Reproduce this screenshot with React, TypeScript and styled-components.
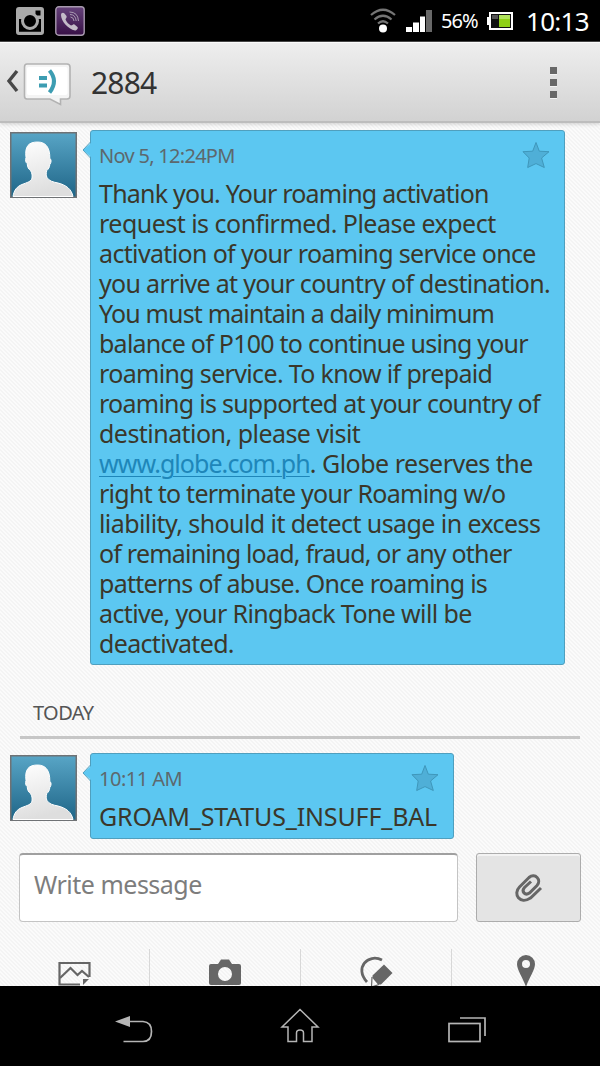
import React from "react";
import styled, { createGlobalStyle } from "styled-components";

const Global = createGlobalStyle`
  * { box-sizing: border-box; }
  body { margin: 0; font-family: "Noto Sans", "Open Sans", sans-serif; background: #000; }
`;

const Screen = styled.div`
  width: 600px;
  height: 1066px;
  display: flex;
  flex-direction: column;
  overflow: hidden;
`;

const StatusBar = styled.div`
  height: 42px;
  flex: none;
  display: flex;
  align-items: center;
  background: #000;
  border-bottom: 1px solid #4a4a4a;
  color: #fff;
  padding: 0 10px 0 16px;
`;

const StatusIcons = styled.div`
  display: flex;
  align-items: center;
  gap: 11px;
  flex: 1;
`;

const Battery = styled.span`
  width: 46px;
  font-size: 20px;
  letter-spacing: -0.9px;
  white-space: nowrap;
`;

const Clock = styled.span`
  width: 64px;
  font-size: 26px;
  line-height: 30px;
  letter-spacing: -0.7px;
  white-space: nowrap;
`;

const Header = styled.header`
  height: 81px;
  flex: none;
  display: flex;
  align-items: center;
  background: linear-gradient(#eeeeee, #d2d2d2);
  border-top: 1px solid #fbfbfb;
  border-bottom: 2px solid #bdbdbd;
  box-shadow: 0 1px 4px rgba(0, 0, 0, 0.18);
  padding: 0 43px 0 6px;
  z-index: 1;
`;

const ConversationIcon = styled.svg`
  margin-top: 6px;
  flex: none;
`;

const Title = styled.h1`
  margin: 2px 0 0 19px;
  flex: 1;
  font-size: 30px;
  font-weight: 400;
  line-height: 40px;
  letter-spacing: -0.8px;
  color: #333;
`;

const Overflow = styled.div`
  display: flex;
  flex-direction: column;
  gap: 5px;
`;

const Dot = styled.i`
  width: 7px;
  height: 7px;
  background: #686868;
  box-shadow: 0 1px 0 #f4f4f4;
`;

const Thread = styled.main`
  flex: 1;
  min-height: 0;
  display: flex;
  flex-direction: column;
  overflow: hidden;
  background-color: #fbfbfb;
  background-image: linear-gradient(45deg, #f4f4f4 25%, transparent 25% 50%, #f4f4f4 50% 75%, transparent 75%);
  background-size: 4px 4px;
`;

const Message = styled.section<{ $top: number }>`
  display: flex;
  align-items: flex-start;
  gap: 13px;
  padding: ${(p) => p.$top}px 0 0 10px;
`;

const Avatar = styled.div`
  margin-top: 2px;
  width: 67px;
  height: 66px;
  flex: none;
  svg { display: block; }
`;

const Bubble = styled.article<{ $w: number; $h: number }>`
  position: relative;
  width: ${(p) => p.$w}px;
  height: ${(p) => p.$h}px;
  background: #5cc7f1;
  border: 1px solid #4f9fbe;
  border-radius: 3px;
  padding: 10px 14px 0 8px;
`;

const Tail = styled.svg`
  position: absolute;
  left: -9px;
  top: 10px;
`;

const BubbleHead = styled.div`
  display: flex;
  justify-content: space-between;
  height: 37.4px;
`;

const Time = styled.time<{ $track: number }>`
  font-size: 20px;
  line-height: 30px;
  letter-spacing: ${(p) => p.$track}px;
  color: #5d686d;
`;

const Line = styled.div<{ $track?: number }>`
  height: 30px;
  line-height: 30px;
  font-size: 25px;
  letter-spacing: ${(p) => p.$track ?? 0}px;
  white-space: nowrap;
  color: #3b372a;
`;

const Link = styled.a`
  color: #1e86b9;
  letter-spacing: -0.94px;
  text-decoration: underline;
  text-decoration-thickness: 1px;
  text-underline-offset: 3px;
`;

const DayHeading = styled.h2`
  margin: 33px 20px 0;
  height: 41px;
  padding-left: 13px;
  border-bottom: 3px solid #c6c6c6;
  font-size: 20px;
  line-height: 30px;
  font-weight: 400;
  letter-spacing: -0.6px;
  color: #555;
`;

const Composer = styled.div`
  display: flex;
  gap: 18px;
  padding: 14px 19px 0;
`;

const Field = styled.div`
  width: 439px;
  height: 69px;
  background: #fff;
  border: 1px solid #c4c4c4;
  border-top: 2px solid #a0a0a0;
  border-radius: 4px;
  padding: 11px 14px;
  font-size: 25px;
  line-height: 36px;
  letter-spacing: -0.5px;
  color: #7d7d7d;
`;

const Attach = styled.div`
  width: 105px;
  height: 69px;
  display: flex;
  align-items: center;
  justify-content: center;
  background: #e4e4e4;
  border: 1px solid #acacac;
  border-radius: 3px;
  box-shadow: inset 0 2px 0 #f3f3f3;
`;

const Tools = styled.div`
  margin-top: 27px;
  height: 37px;
  display: flex;
  overflow: hidden;
`;

const Tool = styled.div<{ $w: number }>`
  width: ${(p) => p.$w}px;
  flex: none;
  display: flex;
  justify-content: center;
  border-right: 1px solid #d8d8d8;
  &:last-child { border-right: 0; }
  svg { display: block; flex: none; }
`;

const NavBar = styled.nav`
  height: 80px;
  flex: none;
  display: flex;
  justify-content: space-between;
  background: #000;
  padding: 20px 112px 0;
`;

const Silhouette = () => (
  <Avatar>
    <svg width="67" height="66" viewBox="0 0 67 66">
      <defs>
        <linearGradient id="sea" x1="0" y1="0" x2="0" y2="1">
          <stop offset="0" stopColor="#58a5c6" />
          <stop offset="1" stopColor="#1f6587" />
        </linearGradient>
        <linearGradient id="body" x1="0" y1="0" x2="0.3" y2="1">
          <stop offset="0" stopColor="#fff" />
          <stop offset="1" stopColor="#dedede" />
        </linearGradient>
      </defs>
      <rect x="0.75" y="0.75" width="65.5" height="64.5" fill="url(#sea)" stroke="#6f7275" strokeWidth="1.5" />
      <path
        d="M3 64.5C4 58 7 54.500 12 52.500C17 50.500 21.500 49.500 22 46C22.300 43 22 41 20.500 38.500C18.500 37 17.500 35.500 17.200 31.500C15.500 30.500 15.300 28 16 25.500C14.500 14 19 10 27.500 10C35.500 10 40 15 39.800 26.500C41.500 27 41.500 30.500 39.800 32.500C39.500 35.500 38.500 37 36.800 38.500C36 41 36 43.500 37 45.500C39 49 43 50 48 51C56 53 61.500 57 63 64.500Z"
        fill="url(#body)"
        stroke="#fff"
        strokeWidth="1"
      />
    </svg>
  </Avatar>
);

const Pointer = () => (
  <Tail width="10" height="18" viewBox="0 0 10 18">
    <path d="M10 1L1 9L10 17Z" fill="#5cc7f1" />
    <path d="M8.500 1L1 9L8.500 17" fill="none" stroke="#4f9fbe" />
  </Tail>
);

const Star = () => (
  <svg width="28" height="28" viewBox="0 0 28 28">
    <path d="M14 1.500L17.300 10.200L27 10.700L19.600 17L22.300 26.500L14 22.600L5.700 26.500L7.200 17L1 10.700L10.700 10.200Z" fill="#4fafd7" stroke="#3f97bb" strokeWidth="1" />
  </svg>
);

const lines: [string, number][] = [
  ["Thank you. Your roaming activation", -0.77],
  ["request is confirmed. Please expect", -0.52],
  ["activation of your roaming service once", -0.65],
  ["you arrive at your country of destination.", -0.69],
  ["You must maintain a daily minimum", -0.85],
  ["balance of P100 to continue using your", -0.76],
  ["roaming service. To know if prepaid", -0.66],
  ["roaming is supported at your country of", -0.74],
  ["destination, please visit", -0.54],
];
const linesAfter: [string, number][] = [
  ["right to terminate your Roaming w/o", -0.74],
  ["liability, should it detect usage in excess", -0.58],
  ["of remaining load, fraud, or any other", -0.79],
  ["patterns of abuse. Once roaming is", -0.71],
  ["active, your Ringback Tone will be", -0.63],
  ["deactivated.", -0.67],
];

export default function App() {
  return (
    <Screen>
      <Global />
      <StatusBar>
        <StatusIcons>
          <svg width="28" height="28" viewBox="0 0 28 28">
            <path fillRule="evenodd" fill="#aaa" d="M3 0H25Q28 0 28 3V25Q28 28 25 28H3Q0 28 0 25V3Q0 0 3 0ZM19.500 3.500V8.500H24.500V3.500ZM3 12V24.500H25V12H22A8.500 8.500 0 1 1 6 12Z" />
            <path d="M3 12H25V24.500H3Z" fill="#000" />
            <circle cx="14" cy="14" r="7.500" fill="#000" stroke="#aaa" strokeWidth="3" />
          </svg>
          <svg width="30" height="30" viewBox="0 0 30 30">
            <defs>
              <linearGradient id="plum" x1="0" y1="0" x2="0" y2="1">
                <stop offset="0" stopColor="#65427a" />
                <stop offset="1" stopColor="#371046" />
              </linearGradient>
            </defs>
            <rect x="0.800" y="0.800" width="28.400" height="28.400" rx="3" fill="url(#plum)" stroke="#a79aae" strokeWidth="1.400" />
            <path d="M6 9C6 7 8 6 9.500 7.500L11.500 10C12.300 11.500 10.500 12.500 10.500 13.500C11.500 16 13.500 18 16 19.500C17.500 19.500 18 17.500 19.500 18.500L22.500 21C23.500 22.500 21.500 24.500 20 24.500C13 23 6 15 6 9Z" fill="#c4bcc8" />
            <path d="M15.500 11Q18.500 11 19 15M15 8.500Q20.500 8.500 21.200 15M14.500 6Q23 6 23.500 15" fill="none" stroke="#a99bb2" strokeWidth="1" />
          </svg>
        </StatusIcons>
        <svg width="71" height="26" viewBox="0 0 71 26">
          <g fill="none" stroke="#757575" strokeWidth="2.200">
            <path d="M1 7Q13 -3.500 25 7" />
            <path d="M4.500 11.500Q13 4 21.500 11.500" />
            <path d="M8 15.500Q13 11 18 15.500" />
          </g>
          <circle cx="13" cy="20.500" r="4" fill="#fff" />
          <path d="M36 19h6v5h-6zM43 14.500h6v9.500h-6zM50 8.500h5v15.500h-5z" fill="#fff" />
          <path d="M56 2h6v22h-6z" fill="#686868" />
        </svg>
        <Battery>56%</Battery>
        <svg width="39" height="20" viewBox="0 0 39 20">
          <path d="M0 6H2V1H26V19H2V14H0Z" fill="#fff" />
          <path d="M4 3H24V17H4Z" fill="#111" />
          <path d="M12 4H23V16H12Z" fill="#8fd016" />
          <path d="M12 4H23V8H12Z" fill="#b0e35b" />
          <path d="M5 4H11V8H5Z" fill="#555" />
        </svg>
        <Clock>10:13</Clock>
      </StatusBar>
      <Header>
        <ConversationIcon width="66" height="46" viewBox="0 0 66 46">
          <path d="M11 9L3 19L11 29" fill="none" stroke="#484848" strokeWidth="3.400" />
          <path d="M21 2H61Q64 2 64 5V34Q64 37 61 37H54.500V42.500L44 37H21Q18.500 37 18.500 34V5Q18.500 2 21 2Z" fill="#f4f4f4" stroke="#b2b2b2" strokeWidth="1.600" />
          <rect x="21" y="5" width="40.500" height="28" rx="2" fill="#fff" />
          <path d="M33 14h8v4h-8zM33 21.500h8v4h-8z" fill="#3d9db2" />
          <path d="M43.500 8.500Q52.500 19 43.500 30.500" fill="none" stroke="#3d9db2" strokeWidth="4" />
        </ConversationIcon>
        <Title>2884</Title>
        <Overflow><Dot /><Dot /><Dot /></Overflow>
      </Header>
      <Thread>
        <Message $top={7}>
          <Silhouette />
          <Bubble $w={475} $h={535}>
            <Pointer />
            <BubbleHead><Time $track={-0.71}>Nov 5, 12:24PM</Time><Star /></BubbleHead>
            {lines.map(([t, k]) => <Line key={t} $track={k}>{t}</Line>)}
            <Line $track={-0.5}><Link>www.globe.com.ph</Link>. Globe reserves the</Line>
            {linesAfter.map(([t, k]) => <Line key={t} $track={k}>{t}</Line>)}
          </Bubble>
        </Message>
        <DayHeading>TODAY</DayHeading>
        <Message $top={14}>
          <Silhouette />
          <Bubble $w={364} $h={86}>
            <Pointer />
            <BubbleHead><Time $track={-0.5}>10:11 AM</Time><Star /></BubbleHead>
            <Line $track={-0.15}>GROAM_STATUS_INSUFF_BAL</Line>
          </Bubble>
        </Message>
        <Composer>
          <Field>Write message</Field>
          <Attach>
            <svg width="28" height="30" viewBox="0 0 28 30">
              <path d="M26 15L15.500 25C5 32 -2.500 21 4.500 14L14 4.500C20 -0.500 27 7 22 12.500L14.500 20C10 23 6 18.500 9.500 14.500L16 8.500" fill="none" stroke="#666" strokeWidth="3" />
            </svg>
          </Attach>
        </Composer>
        <Tools>
          <Tool $w={150}>
            <svg width="34" height="37" viewBox="0 0 34 37">
              <path d="M22 35.500H1.500V14H31.500V28" fill="none" stroke="#666" strokeWidth="2.200" />
              <path d="M2 29L12.500 19L19.500 26L24 22L31 28" fill="none" stroke="#666" strokeWidth="2.200" />
              <path d="M25 30H31L25 36Z" fill="#666" />
            </svg>
          </Tool>
          <Tool $w={151}>
            <svg width="34" height="37" viewBox="0 0 34 37">
              <path fillRule="evenodd" fill="#666" d="M3 15H10L13 10.500H21L24 15H31Q33 15 33 17V34Q33 36 31 36H3Q1 36 1 34V17Q1 15 3 15ZM17 18A7 7 0 1 0 17 32A7 7 0 1 0 17 18Z" />
            </svg>
          </Tool>
          <Tool $w={151}>
            <svg width="36" height="37" viewBox="0 0 36 37">
              <path d="M24 11C10 4 -4 19 9 33" fill="none" stroke="#666" strokeWidth="2.800" />
              <path d="M26 15.500L34.500 24L23 35.500H20L14.500 29V26.500Z" fill="#666" />
              <path d="M14 28L13.500 38L21 35.500" fill="none" stroke="#666" strokeWidth="1.200" />
            </svg>
          </Tool>
          <Tool $w={148}>
            <svg width="20" height="37" viewBox="0 0 20 37">
              <path fillRule="evenodd" fill="#666" d="M10 6A9 9 0 0 1 19 15C19 21 13 29 10 38C7 29 1 21 1 15A9 9 0 0 1 10 6ZM10 11A4 4 0 1 0 10 19A4 4 0 1 0 10 11Z" />
            </svg>
          </Tool>
        </Tools>
      </Thread>
      <NavBar>
        <svg width="42" height="40" viewBox="0 0 42 40">
          <path d="M17 15.500H31Q39.500 16 39.500 25.500Q39.500 35.500 31 35.500H11.500" fill="none" stroke="#b5b5b5" strokeWidth="1.700" />
          <path d="M3 15.500L18 10V21Z" fill="#b5b5b5" />
        </svg>
        <svg width="42" height="40" viewBox="0 0 42 40">
          <path d="M21 3.500L39 21H33V35.500H24.500V27Q24.500 24 21 24Q17.500 24 17.500 27V35.500H9V21H3Z" fill="none" stroke="#b5b5b5" strokeWidth="1.500" />
        </svg>
        <svg width="42" height="40" viewBox="0 0 42 40">
          <rect x="3" y="17.500" width="31" height="18" fill="none" stroke="#b5b5b5" strokeWidth="1.700" />
          <path d="M14 12H39V30" fill="none" stroke="#b5b5b5" strokeWidth="1.700" />
        </svg>
      </NavBar>
    </Screen>
  );
}
